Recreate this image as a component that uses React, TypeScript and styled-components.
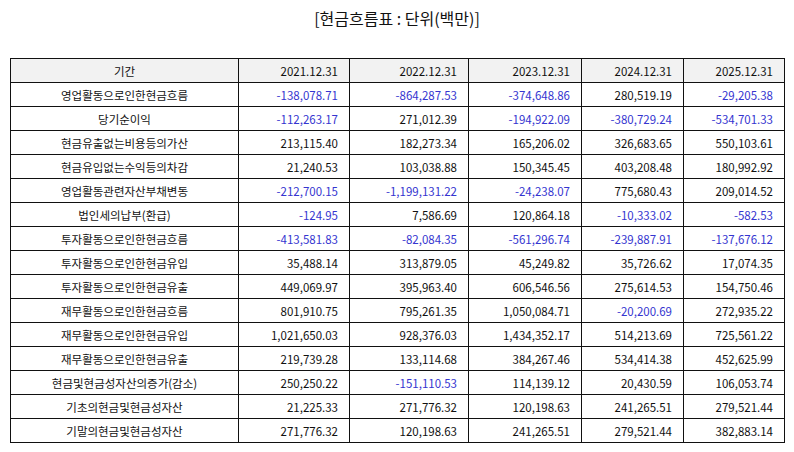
import React from 'react';
import styled, { createGlobalStyle } from 'styled-components';

const GlobalStyle = createGlobalStyle`
  html, body {
    margin: 0;
    padding: 0;
    background: #ffffff;
  }
  body {
    font-family: 'Noto Sans CJK KR', 'Noto Sans', sans-serif;
    color: #111;
  }
`;

const Page = styled.div`
  width: 794px;
  height: 452px;
  padding: 5px 10px 0;
  box-sizing: border-box;
`;

const Title = styled.h2`
  margin: 0;
  height: 53px;
  font-size: 16px;
  font-weight: 400;
  line-height: 26px;
  text-align: center;
  color: #111;
`;

const Table = styled.table`
  width: 774px;
  border-collapse: collapse;
  table-layout: fixed;
  font-size: 11.5px;
`;

const HeadCell = styled.th<{ $label?: boolean }>`
  height: 23px;
  padding: 0 11px;
  border: 1px solid #111;
  background: #f2f2f2;
  font-weight: 400;
  text-align: ${p => (p.$label ? 'center' : 'right')};
`;

const Cell = styled.td<{ $label?: boolean; $neg?: boolean }>`
  height: 23px;
  padding: 0 11px;
  border: 1px solid #111;
  text-align: ${p => (p.$label ? 'center' : 'right')};
  color: ${p => (p.$neg ? '#3535d0' : '#111')};
  white-space: nowrap;
`;

const periods = ['2021.12.31', '2022.12.31', '2023.12.31', '2024.12.31', '2025.12.31'];
const widths = [228, 111, 119, 113, 102, 101];

const rows: Array<[string, string[]]> = [
  ['영업활동으로인한현금흐름', ['-138,078.71', '-864,287.53', '-374,648.86', '280,519.19', '-29,205.38']],
  ['당기순이익', ['-112,263.17', '271,012.39', '-194,922.09', '-380,729.24', '-534,701.33']],
  ['현금유출없는비용등의가산', ['213,115.40', '182,273.34', '165,206.02', '326,683.65', '550,103.61']],
  ['현금유입없는수익등의차감', ['21,240.53', '103,038.88', '150,345.45', '403,208.48', '180,992.92']],
  ['영업활동관련자산부채변동', ['-212,700.15', '-1,199,131.22', '-24,238.07', '775,680.43', '209,014.52']],
  ['법인세의납부(환급)', ['-124.95', '7,586.69', '120,864.18', '-10,333.02', '-582.53']],
  ['투자활동으로인한현금흐름', ['-413,581.83', '-82,084.35', '-561,296.74', '-239,887.91', '-137,676.12']],
  ['투자활동으로인한현금유입', ['35,488.14', '313,879.05', '45,249.82', '35,726.62', '17,074.35']],
  ['투자활동으로인한현금유출', ['449,069.97', '395,963.40', '606,546.56', '275,614.53', '154,750.46']],
  ['재무활동으로인한현금흐름', ['801,910.75', '795,261.35', '1,050,084.71', '-20,200.69', '272,935.22']],
  ['재무활동으로인한현금유입', ['1,021,650.03', '928,376.03', '1,434,352.17', '514,213.69', '725,561.22']],
  ['재무활동으로인한현금유출', ['219,739.28', '133,114.68', '384,267.46', '534,414.38', '452,625.99']],
  ['현금및현금성자산의증가(감소)', ['250,250.22', '-151,110.53', '114,139.12', '20,430.59', '106,053.74']],
  ['기초의현금및현금성자산', ['21,225.33', '271,776.32', '120,198.63', '241,265.51', '279,521.44']],
  ['기말의현금및현금성자산', ['271,776.32', '120,198.63', '241,265.51', '279,521.44', '382,883.14']],
];

export default function App() {
  return (
    <>
      <GlobalStyle />
      <Page>
        <Title>[현금흐름표 : 단위(백만)]</Title>
        <Table>
          <colgroup>
            {widths.map((w, i) => (
              <col key={i} style={{ width: w }} />
            ))}
          </colgroup>
          <thead>
            <tr>
              <HeadCell $label>기간</HeadCell>
              {periods.map(p => (
                <HeadCell key={p}>{p}</HeadCell>
              ))}
            </tr>
          </thead>
          <tbody>
            {rows.map(([label, values]) => (
              <tr key={label}>
                <Cell $label>{label}</Cell>
                {values.map((v, i) => (
                  <Cell key={i} $neg={v.startsWith('-')}>
                    {v}
                  </Cell>
                ))}
              </tr>
            ))}
          </tbody>
        </Table>
      </Page>
    </>
  );
}
